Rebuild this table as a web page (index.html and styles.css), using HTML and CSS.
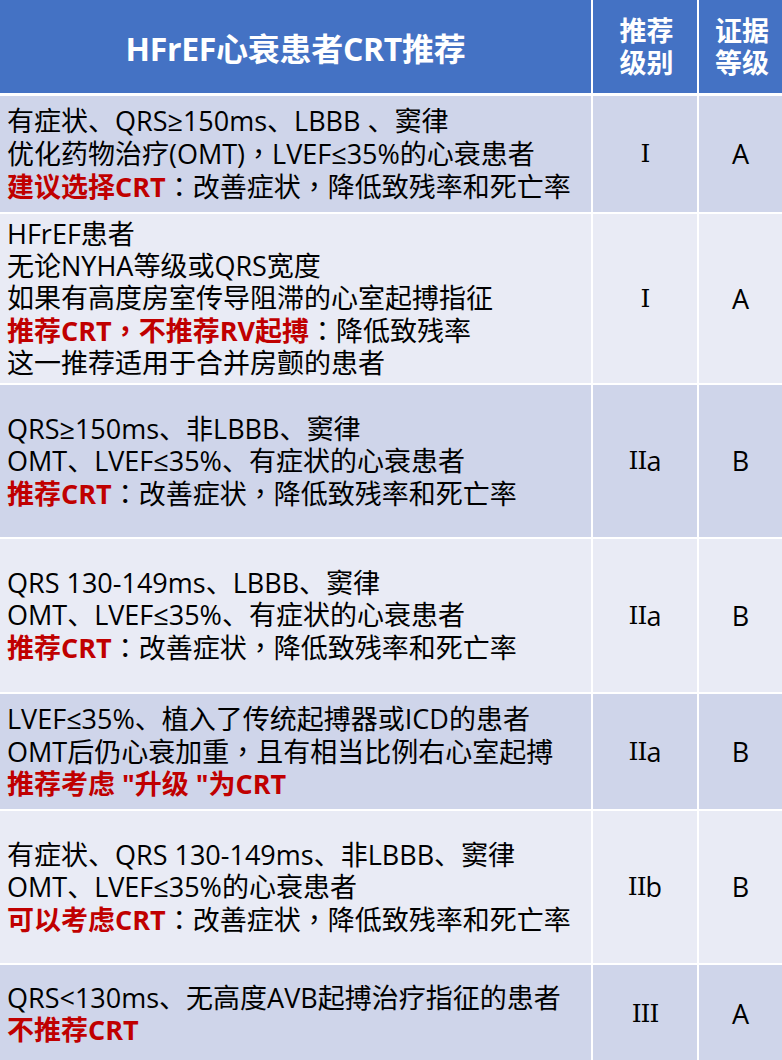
FILE: index.html
```html
<!DOCTYPE html>
<html lang="zh-CN">
<head>
<meta charset="utf-8">
<title>HFrEF心衰患者CRT推荐</title>
<link rel="stylesheet" href="styles.css">
</head>
<body>
<div class="table">
  <div class="hd hd-title">HFrEF心衰患者CRT推荐</div>
  <div class="hd hd-small">推荐<br>级别</div>
  <div class="hd hd-small">证据<br>等级</div>

  <div class="cell desc odd">
    <div class="ln">有症状、QRS≥150ms、LBBB 、窦律</div>
    <div class="ln">优化药物治疗(OMT)<span class="pc" lang="zh-TW">，</span>LVEF≤35%的心衰患者</div>
    <div class="ln"><b class="red">建议选择CRT</b><span class="pc" lang="zh-TW">：</span>改善症状<span class="pc" lang="zh-TW">，</span>降低致残率和死亡率</div>
  </div>
  <div class="cell mid odd"><span class="rn">I</span></div>
  <div class="cell mid odd">A</div>

  <div class="cell desc even">
    <div class="ln">HFrEF患者</div>
    <div class="ln">无论NYHA等级或QRS宽度</div>
    <div class="ln">如果有高度房室传导阻滞的心室起搏指征</div>
    <div class="ln"><b class="red">推荐CRT<span class="pc" lang="zh-TW">，</span>不推荐RV起搏</b><span class="pc" lang="zh-TW">：</span>降低致残率</div>
    <div class="ln">这一推荐适用于合并房颤的患者</div>
  </div>
  <div class="cell mid even"><span class="rn">I</span></div>
  <div class="cell mid even">A</div>

  <div class="cell desc odd">
    <div class="ln">QRS≥150ms、非LBBB、窦律</div>
    <div class="ln">OMT、LVEF≤35%、有症状的心衰患者</div>
    <div class="ln"><b class="red">推荐CRT</b><span class="pc" lang="zh-TW">：</span>改善症状<span class="pc" lang="zh-TW">，</span>降低致残率和死亡率</div>
  </div>
  <div class="cell mid odd"><span class="rn">II</span>a</div>
  <div class="cell mid odd">B</div>

  <div class="cell desc even">
    <div class="ln">QRS 130-149ms、LBBB、窦律</div>
    <div class="ln">OMT、LVEF≤35%、有症状的心衰患者</div>
    <div class="ln"><b class="red">推荐CRT</b><span class="pc" lang="zh-TW">：</span>改善症状<span class="pc" lang="zh-TW">，</span>降低致残率和死亡率</div>
  </div>
  <div class="cell mid even"><span class="rn">II</span>a</div>
  <div class="cell mid even">B</div>

  <div class="cell desc odd">
    <div class="ln">LVEF≤35%、植入了传统起搏器或ICD的患者</div>
    <div class="ln">OMT后仍心衰加重<span class="pc" lang="zh-TW">，</span>且有相当比例右心室起搏</div>
    <div class="ln"><b class="red">推荐考虑 "升级 "为CRT</b></div>
  </div>
  <div class="cell mid odd"><span class="rn">II</span>a</div>
  <div class="cell mid odd">B</div>

  <div class="cell desc even">
    <div class="ln">有症状、QRS 130-149ms、非LBBB、窦律</div>
    <div class="ln">OMT、LVEF≤35%的心衰患者</div>
    <div class="ln"><b class="red">可以考虑CRT</b><span class="pc" lang="zh-TW">：</span>改善症状<span class="pc" lang="zh-TW">，</span>降低致残率和死亡率</div>
  </div>
  <div class="cell mid even"><span class="rn">II</span>b</div>
  <div class="cell mid even">B</div>

  <div class="cell desc odd">
    <div class="ln">QRS&lt;130ms、无高度AVB起搏治疗指征的患者</div>
    <div class="ln"><b class="red">不推荐CRT</b></div>
  </div>
  <div class="cell mid odd"><span class="rn">III</span></div>
  <div class="cell mid odd">A</div>
</div>
</body>
</html>
```
FILE: styles.css
```css
html, body {
  margin: 0;
  padding: 0;
  background: #ffffff;
}
body {
  font-family: "Open Sans", "Noto Sans CJK SC", sans-serif;
  color: #000;
}
.table {
  display: grid;
  grid-template-columns: 591px 104px 1fr;
  grid-template-rows: 94px 116px 169px 152px 153px 115px 152px 97px;
  column-gap: 2px;
  row-gap: 2px;
  background: #ffffff;
  width: 782px;
}
.hd {
  background: #4472c4;
  color: #ffffff;
  font-weight: bold;
  display: flex;
  align-items: center;
  justify-content: center;
  text-align: center;
  border-bottom: 1px solid #ffffff;
  box-sizing: border-box;
}
.hd-title {
  font-size: 32px;
  letter-spacing: -0.3px;
}
.hd-small {
  font-size: 27px;
  line-height: 32px;
  padding-left: 3px;
}
.cell {
  font-size: 27px;
  line-height: 32px;
  display: flex;
  align-items: center;
}
.desc {
  padding-left: 7px;
  flex-direction: column;
  justify-content: center;
  align-items: flex-start;
}
.ln {
  white-space: nowrap;
}
.pc {
  font-family: "Noto Sans CJK TC", "Noto Sans CJK SC", sans-serif;
  font-weight: normal;
}
.red .pc {
  font-weight: bold;
}
.mid {
  justify-content: center;
}
.odd { background: #cfd5ea; }
.even { background: #e9ebf5; }
.red {
  color: #c00000;
  font-weight: bold;
}
.rn {
  font-family: "DejaVu Serif", "Liberation Serif", serif;
  font-size: 25px;
  letter-spacing: -1px;
}
```
